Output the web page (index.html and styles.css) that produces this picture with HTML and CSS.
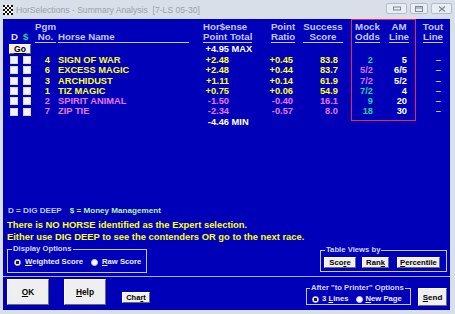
FILE: index.html
```html
<!DOCTYPE html>
<html lang="en">
<head>
  <meta charset="UTF-8">
  <title>HorSelections - Summary Analysis</title>
  <link rel="stylesheet" href="styles.css">
</head>
<body>
  <div class="win">
    <div class="titlebar">
      <svg class="appicon" viewBox="0 0 10 10">
        <rect width="10" height="10" fill="#fff"/>
        <path d="M0 0h2v2H0zM4 0h2v2H4zM8 0h2v2H8zM2 2h2v2H2zM6 2h2v2H6zM0 4h2v2H0zM4 4h2v2H4zM8 4h2v2H8zM2 6h2v2H2zM6 6h2v2H6zM0 8h2v2H0zM4 8h2v2H4zM8 8h2v2H8z" fill="#111"/>
      </svg>
      <span class="title">HorSelections - Summary Analysis&nbsp;&nbsp;[7-LS 05-30]</span>
      <div class="winbtns">
        <span class="wb wb-min"><svg viewBox="0 0 8 5"><rect x="0.5" y="0.5" width="7" height="3" fill="none" stroke="#7d8794"/></svg></span>
        <span class="wb wb-max"><svg viewBox="0 0 8 6"><rect x="0.5" y="0.5" width="7" height="5" fill="none" stroke="#7d8794"/><path d="M1 2h6" stroke="#7d8794"/></svg></span>
        <span class="wb wb-close"><svg viewBox="0 0 8 6"><path d="M1 0.5l6 5M7 0.5l-6 5" stroke="#7d8794" stroke-width="1.2"/></svg></span>
      </div>
    </div>

    <div class="client">
      <!-- summary table, laid out column by column -->
      <div class="grid">
        <div class="col c-chk">
          <div class="hd"><div class="hdt plain"><span class="hw">D</span> <span class="hg">$</span></div></div>
          <div class="r0"><button class="go">Go</button></div>
          <div class="r"><i class="cb"></i><i class="cb"></i></div>
          <div class="r"><i class="cb"></i><i class="cb"></i></div>
          <div class="r"><i class="cb"></i><i class="cb"></i></div>
          <div class="r"><i class="cb"></i><i class="cb"></i></div>
          <div class="r"><i class="cb"></i><i class="cb"></i></div>
          <div class="r"><i class="cb"></i><i class="cb"></i></div>
        </div>

        <div class="col c-pgm">
          <div class="hd"><div class="hdt">Pgm<br>No.</div></div>
          <div class="r0"></div>
          <div class="r y">4</div>
          <div class="r y">6</div>
          <div class="r y">3</div>
          <div class="r y">1</div>
          <div class="r p">2</div>
          <div class="r p">7</div>
        </div>

        <div class="col c-name">
          <div class="hd"><div class="hdt">Horse Name</div></div>
          <div class="r0"></div>
          <div class="r y">SIGN OF WAR</div>
          <div class="r y">EXCESS MAGIC</div>
          <div class="r y">ARCHIDUST</div>
          <div class="r y">TIZ MAGIC</div>
          <div class="r p">SPIRIT ANIMAL</div>
          <div class="r p">ZIP TIE</div>
        </div>

        <div class="col c-pt">
          <div class="hd"><div class="hdt">Hor$ense<br>Point Total</div></div>
          <div class="r0 w"><span class="num">+4.95</span> MAX</div>
          <div class="r y"><span class="num">+2.48</span></div>
          <div class="r y"><span class="num">+2.48</span></div>
          <div class="r y"><span class="num">+1.11</span></div>
          <div class="r y"><span class="num">+0.75</span></div>
          <div class="r p"><span class="num">-1.50</span></div>
          <div class="r p"><span class="num">-2.34</span></div>
          <div class="r w"><span class="num">-4.46</span> MIN</div>
        </div>

        <div class="col c-ratio">
          <div class="hd"><div class="hdt">Point<br>Ratio</div></div>
          <div class="r0"></div>
          <div class="r y">+0.45</div>
          <div class="r y">+0.44</div>
          <div class="r y">+0.14</div>
          <div class="r y">+0.06</div>
          <div class="r p">-0.40</div>
          <div class="r p">-0.57</div>
        </div>

        <div class="col c-score">
          <div class="hd"><div class="hdt">Success<br>Score</div></div>
          <div class="r0"></div>
          <div class="r y">83.8</div>
          <div class="r y">83.7</div>
          <div class="r y">61.9</div>
          <div class="r y">54.9</div>
          <div class="r p">16.1</div>
          <div class="r p">8.0</div>
        </div>

        <div class="box">
          <div class="col c-mock">
            <div class="hd"><div class="hdt">Mock<br>Odds</div></div>
            <div class="r0"></div>
            <div class="r g">2</div>
            <div class="r m">5/2</div>
            <div class="r m">7/2</div>
            <div class="r g">7/2</div>
            <div class="r g">9</div>
            <div class="r g">18</div>
          </div>
          <div class="col c-am">
            <div class="hd"><div class="hdt">AM<br>Line</div></div>
            <div class="r0"></div>
            <div class="r w">5</div>
            <div class="r w">6/5</div>
            <div class="r w">5/2</div>
            <div class="r w">4</div>
            <div class="r w">20</div>
            <div class="r w">30</div>
          </div>
        </div>

        <div class="col c-tout">
          <div class="hd"><div class="hdt">Tout<br>Line</div></div>
          <div class="r0"></div>
          <div class="r d">–</div>
          <div class="r d">–</div>
          <div class="r d">–</div>
          <div class="r d">–</div>
          <div class="r d">–</div>
          <div class="r d">–</div>
        </div>
      </div>

      <div class="keys"><span class="kd">D = DIG DEEP</span><span class="km">$ = Money Management</span></div>
      <div class="msg">
        There is NO HORSE identified as the Expert selection.<br>
        Either use DIG DEEP to see the contenders OR go to the next race.
      </div>

      <div class="opts">
        <fieldset class="grp grp-display">
          <legend>Display Options</legend>
          <div class="radios">
            <label><i class="rd on"></i><span><u>W</u>eighted Score</span></label>
            <label><i class="rd"></i><span><u>R</u>aw Score</span></label>
          </div>
        </fieldset>
        <fieldset class="grp grp-views">
          <legend>Table Views by</legend>
          <div class="vbtns">
            <button class="btn b-score">Sco<u>r</u>e</button>
            <button class="btn b-rank">Ran<u>k</u></button>
            <button class="btn b-pct"><u>P</u>ercentile</button>
          </div>
        </fieldset>
      </div>

      <div class="sep"></div>

      <div class="bottom">
        <button class="btn big"><u>O</u>K</button>
        <button class="btn big help"><u>H</u>elp</button>
        <button class="btn chart">Cha<u>r</u>t</button>
        <fieldset class="grp grp-print">
          <legend>After "to Printer" Options</legend>
          <div class="radios">
            <label><i class="rd on"></i><span>3 <u>L</u>ines</span></label>
            <label><i class="rd"></i><span><u>N</u>ew Page</span></label>
          </div>
        </fieldset>
        <button class="btn send"><u>S</u>end</button>
      </div>
    </div>
  </div>
</body>
</html>
```

FILE: styles.css
```css
:root { --blue: #0000b8; --yellow: #ffff20; --pink: #e878ee; --green: #22d49a; --hdr: #c4c8ff; --line: #c4caff; }
* { box-sizing: border-box; margin: 0; padding: 0; }
body { width: 455px; height: 314px; overflow: hidden; background: #d8dfe9; font-family: 'Liberation Sans', Arial, sans-serif; font-weight: bold; }
.win { height: 314px; display: flex; flex-direction: column; }

/* title bar */
.titlebar { height: 19px; display: flex; align-items: center; padding: 0 3px 0 3px; }
.appicon { width: 10px; height: 10px; margin-right: 3px; }
.title { flex: 1; font-weight: normal; font-size: 8.6px; color: #98a1ac; white-space: nowrap; }
.winbtns { display: flex; gap: 3px; align-self: flex-start; margin-top: 3px; }
.wb { height: 11px; border: 1px solid #b3bcc8; border-radius: 2px; background: #e9eef4; display: flex; align-items: center; justify-content: center; }
.wb-min, .wb-close { width: 21px; }
.wb-max { width: 18px; }
.wb svg { width: 8px; height: 6px; }

/* blue client area */
.client { flex: 1; margin: 0 5px 4px 3px; background: var(--blue); display: flex; flex-direction: column; padding-bottom: 4px; }

.grid { display: flex; align-items: flex-start; padding: 3px 0 0 6px; }
.col { display: flex; flex-direction: column; }
.hd { height: 21px; display: flex; align-items: flex-end; justify-content: center; font-size: 9.7px; line-height: 10px; color: var(--hdr); text-align: center; }
.hdt { border-bottom: 1px solid var(--line); }
.hdt.plain { border-bottom: none; padding-bottom: 1px; display: flex; gap: 5px; }
.hw { color: #e0e4ff; }
.hg { color: var(--green); }
.r0 { height: 11px; margin-top: 1px; font-size: 9.3px; line-height: 11px; }
.r { height: 10.3px; font-size: 9.3px; line-height: 10.3px; white-space: nowrap; }
.y { color: var(--yellow); }
.p { color: var(--pink); }
.g { color: var(--green); }
.m { color: #d670e8; }
.w { color: #fff; }
.d { color: #c8cce8; }

.c-chk { width: 24px; }
.c-chk .hd { justify-content: flex-start; padding-left: 2px; }
.c-chk .r { display: flex; align-items: center; gap: 5px; padding-left: 1px; }
.cb { display: block; width: 8px; height: 8px; background: #f4f4f4; border: 1px solid #d8d8d8; }
.go { width: 22px; height: 10px; margin-top: 0; background: #f0f0f0; border: 1px solid; border-color: #fff #6a6a6a #6a6a6a #fff; font: bold 8.5px/8px 'Liberation Sans', Arial, sans-serif; color: #000; text-decoration: underline; }

.c-pgm { width: 25px; }
.c-pgm .r { text-align: right; padding-right: 8px; }
.c-name { width: 131px; }
.c-name .hd { justify-content: stretch; }
.c-name .hdt { width: 100%; text-align: left; }
.c-pt { width: 51px; margin-left: 14px; }
.c-pt .hd { justify-content: flex-start; }
.c-pt .hdt { text-align: left; }
.num { display: inline-block; width: 26px; text-align: right; }
.c-ratio { width: 30px; margin-left: 14px; }
.c-ratio .r { text-align: right; padding-right: 5px; }
.c-score { width: 42px; margin-left: 4px; }
.c-score .r { text-align: right; padding-right: 6px; }

.box { display: flex; margin: -3px 0 0 7px; padding: 2px 0 3px; border: 1px solid #f02850; }
.c-mock { width: 31px; }
.c-mock .r { text-align: right; padding-right: 10px; }
.c-am { width: 32px; }
.c-am .r { text-align: right; padding-right: 8px; }
.c-tout { width: 26px; margin-left: 4px; }
.c-tout .r { text-align: right; padding-right: 5px; }

/* notes */
.keys { margin-top: auto; padding-left: 5px; font-size: 8.1px; line-height: 10px; }
.kd { color: #b8d0ff; margin-right: 8px; }
.km { color: #b4f4a0; }
.msg { padding: 3px 0 0 4px; font-size: 9.4px; line-height: 11.5px; color: var(--yellow); white-space: nowrap; }

/* group boxes */
.grp { border: 1px solid var(--line); min-width: 0; font-size: 7.7px; line-height: 10px; }
.grp legend { padding: 0 1px; color: #d4d8ff; }
.radios { display: flex; height: 10px; align-items: center; color: #eceeff; }
.radios label { display: flex; align-items: center; }
.rd { display: block; width: 7px; height: 7px; border-radius: 50%; background: #fff; border: 1px solid #c8c8d8; }
.rd.on { background: radial-gradient(circle, #1a1a40 0 1.6px, #fff 1.9px); }

.opts { display: flex; justify-content: space-between; align-items: flex-start; margin-top: 2px; padding: 0 3px 0 4px; }
.grp-display { width: 140px; padding: 0 0 5px 4px; }
.grp-display .radios { margin: 3px 0 0 2px; }
.grp-display .rd { margin-right: 4px; }
.grp-display label + label { margin-left: 8px; }
.grp-views { width: 127px; margin-top: 1px; padding: 0 0 3px 3px; }
.grp-views legend { margin-left: 1px; }
.vbtns { display: flex; margin-top: 2px; }
.btn { background: #efefef; border: 1px solid; border-color: #fff #6a6a6a #6a6a6a #fff; color: #000; font-family: 'Liberation Sans', Arial, sans-serif; font-weight: bold; font-size: 7.7px; line-height: 9px; }
.vbtns .btn { height: 11px; }
.b-score { width: 32px; }
.b-rank { width: 27px; margin-left: 6px; }
.b-pct { width: 43px; margin-left: 8px; }

.sep { height: 1px; margin-top: 3px; background: #a8b0ff; }

.bottom { display: flex; align-items: flex-start; height: 27px; margin-top: 2px; padding: 0 3px 0 4px; }
.big { width: 42px; height: 26px; font-size: 8.3px; }
.help { margin-left: 15px; }
.chart { width: 28px; height: 11px; margin: 13px 0 0 16px; font-size: 7.5px; }
.grp-print { width: 105px; margin: 4px 0 0 auto; padding: 0 0 0 3px; }
.grp-print .radios { margin: 1px 0 0 2px; }
.grp-print .rd { margin-right: 3px; }
.grp-print label + label { margin-left: 7px; }
.send { width: 29px; height: 18px; margin: 9px 0 0 7px; font-size: 8px; }
```
